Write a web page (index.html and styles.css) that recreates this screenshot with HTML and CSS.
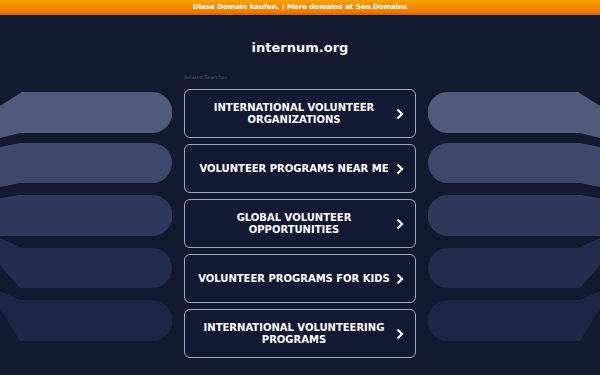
FILE: index.html
```html
<!DOCTYPE html>
<html lang="de">
<head>
<meta charset="utf-8">
<title>internum.org</title>
<link rel="stylesheet" href="styles.css">
</head>
<body>
<div class="topbar">Diese Domain kaufen. | More domains at Seo.Domains</div>
<header class="head"><h1 class="title">internum.org</h1></header>
<main class="row">
  <svg class="deco" width="172" height="300" viewBox="0 0 172 300">
    <path fill="#505b7b" d="M0 32 L22 18 L152 18 A20.5 20.5 0 0 1 152 59 L20 59 L0 64 Z"/>
    <path fill="#3e486b" d="M0 73 L20 69 L152 69 A20 20 0 0 1 152 109 L20 109 L0 113 Z"/>
    <path fill="#2f385b" d="M0 124 L20 121 L152 121 A20.5 20.5 0 0 1 152 162 L20 162 L0 162 Z"/>
    <path fill="#242c4e" d="M0 164 L22 174 L152 174 A20 20 0 0 1 152 214 L20 214 L0 191 Z"/>
    <path fill="#1e2547" d="M0 217 L20 226 L152 226 A20.5 20.5 0 0 1 152 267 L20 267 L0 234 Z"/>
  </svg>
  <section class="list">
    <div class="label">Related Searches</div>
    <a class="btn" href="#"><span class="txt">INTERNATIONAL VOLUNTEER ORGANIZATIONS</span><svg class="chev" width="8" height="12" viewBox="0 0 8 12"><path d="M1.5 1.5 L6 6 L1.5 10.5" fill="none" stroke="#fff" stroke-width="2.2"/></svg></a>
    <a class="btn" href="#"><span class="txt">VOLUNTEER PROGRAMS NEAR ME</span><svg class="chev" width="8" height="12" viewBox="0 0 8 12"><path d="M1.5 1.5 L6 6 L1.5 10.5" fill="none" stroke="#fff" stroke-width="2.2"/></svg></a>
    <a class="btn" href="#"><span class="txt">GLOBAL VOLUNTEER OPPORTUNITIES</span><svg class="chev" width="8" height="12" viewBox="0 0 8 12"><path d="M1.5 1.5 L6 6 L1.5 10.5" fill="none" stroke="#fff" stroke-width="2.2"/></svg></a>
    <a class="btn" href="#"><span class="txt">VOLUNTEER PROGRAMS FOR KIDS</span><svg class="chev" width="8" height="12" viewBox="0 0 8 12"><path d="M1.5 1.5 L6 6 L1.5 10.5" fill="none" stroke="#fff" stroke-width="2.2"/></svg></a>
    <a class="btn" href="#"><span class="txt">INTERNATIONAL VOLUNTEERING PROGRAMS</span><svg class="chev" width="8" height="12" viewBox="0 0 8 12"><path d="M1.5 1.5 L6 6 L1.5 10.5" fill="none" stroke="#fff" stroke-width="2.2"/></svg></a>
  </section>
  <svg class="deco flip" width="172" height="300" viewBox="0 0 172 300">
    <path fill="#505b7b" d="M0 32 L22 18 L152 18 A20.5 20.5 0 0 1 152 59 L20 59 L0 64 Z"/>
    <path fill="#3e486b" d="M0 73 L20 69 L152 69 A20 20 0 0 1 152 109 L20 109 L0 113 Z"/>
    <path fill="#2f385b" d="M0 124 L20 121 L152 121 A20.5 20.5 0 0 1 152 162 L20 162 L0 162 Z"/>
    <path fill="#242c4e" d="M0 164 L22 174 L152 174 A20 20 0 0 1 152 214 L20 214 L0 191 Z"/>
    <path fill="#1e2547" d="M0 217 L20 226 L152 226 A20.5 20.5 0 0 1 152 267 L20 267 L0 234 Z"/>
  </svg>
</main>
</body>
</html>
```
FILE: styles.css
```css
html, body {
  margin: 0;
  padding: 0;
  background: #131a30;
  font-family: "DejaVu Sans", "Liberation Sans", sans-serif;
  color: #fff;
  height: 375px;
  overflow: hidden;
}
.topbar {
  height: 15px;
  line-height: 15px;
  background: linear-gradient(#f7a100, #ec7a00 80%, #c8661a);
  text-align: center;
  font-size: 7px;
  font-weight: bold;
  color: #fff;
}
.head {
  padding-top: 25px;
  text-align: center;
}
.title {
  margin: 0;
  font-size: 13px;
  line-height: 16px;
  font-weight: bold;
  color: #f2f3f6;
}
.row {
  margin-top: 18px;
  display: flex;
  gap: 12px;
  align-items: flex-start;
}
.deco {
  flex: none;
  display: block;
}
.flip {
  transform: scaleX(-1);
}
.list {
  width: 232px;
  flex: none;
  display: flex;
  flex-direction: column;
  gap: 6px;
}
.label {
  font-size: 5px;
  line-height: 6px;
  color: #4f576c;
  margin-bottom: 3px;
}
.btn {
  box-sizing: border-box;
  height: 49px;
  border: 1.5px solid #a3a8b6;
  border-radius: 6px;
  display: flex;
  align-items: center;
  padding: 0 11px 0 10px;
  text-decoration: none;
  color: #fff;
  background: #121933;
}
.txt {
  flex: 1;
  text-align: center;
  font-size: 10px;
  line-height: 12px;
  font-weight: bold;
  padding: 0;
}
.chev {
  flex: none;
  display: block;
  margin-left: 3px;
}
```
